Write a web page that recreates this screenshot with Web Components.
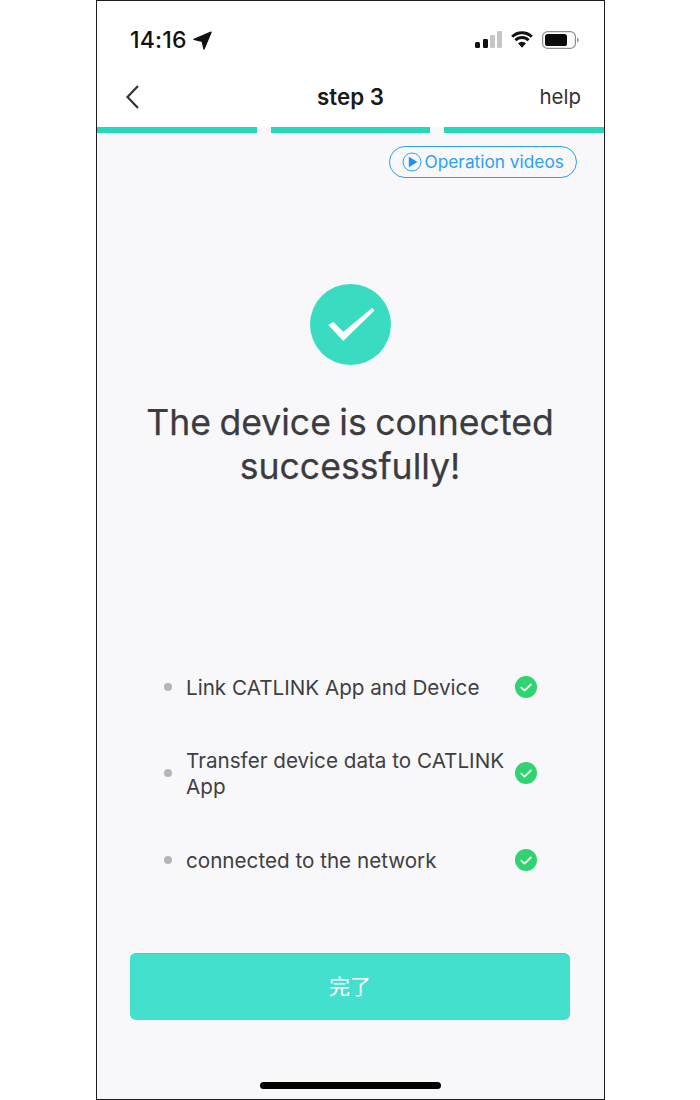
<!DOCTYPE html>
<html lang="en"><head><meta charset="utf-8">
<style>
html,body{margin:0;padding:0;background:#fff}
body{font-family:Inter,"Noto Sans CJK SC",sans-serif}
</style></head><body>
<phone-frame>
  <status-bar></status-bar>
  <nav-bar title="step 3" action="help"></nav-bar>
  <step-progress></step-progress>
  <video-link>Operation videos</video-link>
  <success-hero>The device is connected<br>successfully!</success-hero>
  <check-list>
    <check-item>Link CATLINK App and Device</check-item>
    <check-item>Transfer device data to CATLINK App</check-item>
    <check-item>connected to the network</check-item>
  </check-list>
  <primary-button>完了</primary-button>
  <home-indicator></home-indicator>
</phone-frame>
<script>
function def(name, html, setup){
  customElements.define(name, class extends HTMLElement{
    constructor(){super();this.attachShadow({mode:'open'}).innerHTML=html;}
    connectedCallback(){ if(setup) setup(this); }
  });
}
def('phone-frame',`<style>:host{display:block;box-sizing:border-box;width:509px;height:1100px;margin-left:96px;border:1px solid #1c1c1e;background:#f8f8fb;overflow:hidden}
.c{display:flex;flex-direction:column;height:100%}</style><div class="c"><slot></slot></div>`);
def('status-bar',`<style>:host{display:flex;align-items:center;height:78px;padding:0 25px 0 33px;background:#fff;box-sizing:border-box;color:#111}
.t{font:500 23px/1 Inter,sans-serif;letter-spacing:.2px}
.s{flex:1}
svg{display:block}</style>
<span class="t">14:16</span>
<svg style="margin-left:6px" width="19" height="19" viewBox="0 0 19 19"><path d="M1 8.4 18 1.2 11 18 9.2 10.2Z" fill="#111" stroke="#111" stroke-width="1.4" stroke-linejoin="round"/></svg>
<span class="s"></span>
<svg width="27" height="17" viewBox="0 0 27 17" style="margin-top:-2px"><rect x="0" y="11" width="5" height="6" rx="1.5" fill="#111"/><rect x="8" y="8" width="5" height="9" rx="1.2" fill="#111"/><rect x="15" y="4" width="5" height="13" rx="1.2" fill="#c6c6c6"/><rect x="22" y="0" width="5" height="17" rx="1.2" fill="#c6c6c6"/></svg>
<svg style="margin-left:9px;margin-top:-2px" width="22" height="17" viewBox="0 0 22 17"><path d="M1.2 5.7a14 14 0 0 1 19.6 0M4.4 9.2a9.4 9.4 0 0 1 13.2 0" fill="none" stroke="#111" stroke-width="3"/><path d="M7 12.2a6 6 0 0 1 8 0L11 16.8Z" fill="#111"/></svg>
<svg style="margin-left:9px" width="37" height="18" viewBox="0 0 37 18"><rect x=".6" y=".6" width="32.8" height="16.8" rx="5" fill="#fff" stroke="#8e8e8e" stroke-width="1.2"/><rect x="3" y="3" width="22" height="12" rx="2.6" fill="#0a0a0a"/><path d="M35 6.4c1.2.4 1.8 1.4 1.8 2.6s-.6 2.2-1.8 2.6Z" fill="#9a9a9a"/></svg>`);
def('nav-bar',`<style>:host{display:grid;grid-template-columns:1fr auto 1fr;align-items:center;height:48px;padding:0 28px 12px 28px;background:#fff;box-sizing:border-box}
svg{display:block}
.t{font:600 22.3px/1 Inter,sans-serif;color:#1a1a1a}
.a{justify-self:end;margin-right:-5px;font:400 20.5px/1 Inter,sans-serif;color:#333}</style>
<svg width="16" height="26" viewBox="0 0 16 26"><path d="M13 2 2.5 13 13 24" fill="none" stroke="#333" stroke-width="2.2"/></svg>
<span class="t"></span><span class="a"></span>`,el=>{
  el.shadowRoot.querySelector('.t').textContent=el.getAttribute('title');
  el.shadowRoot.querySelector('.a').textContent=el.getAttribute('action');
});
def('step-progress',`<style>:host{display:flex;gap:14px;height:6px}
i{flex:1;background:#22d9bb}</style><i></i><i></i><i></i>`);
def('video-link',`<style>:host{display:flex;justify-content:flex-end;padding:13px 27px 0 0}
.p{display:flex;align-items:center;gap:3px;box-sizing:border-box;height:32px;width:188px;padding-left:11.5px;border:1.5px solid #2ba0f5;border-radius:16px;color:#2ba0f5;font:400 17.3px/1 Inter,sans-serif}
svg{display:block;flex:none}</style>
<div class="p"><svg width="20" height="20" viewBox="0 0 20 20"><circle cx="10" cy="10" r="9" fill="none" stroke="#2ba0f5" stroke-width="1"/><path d="M6.8 4.8 15.5 10 6.8 15.2Z" fill="#2093f2"/></svg><span><slot></slot></span></div>`);
def('success-hero',`<style>:host{display:flex;flex-direction:column;align-items:center;padding-top:106px}
svg{display:block}
h1{margin:36px 1px 0 0;font:400 35.6px/44px Inter,sans-serif;word-spacing:-1.6px;color:#3c3c3f;text-align:center;-webkit-text-stroke:.25px #3c3c3f}</style>
<svg width="81" height="81" viewBox="0 0 81 81"><circle cx="40.5" cy="40.5" r="40.5" fill="#39dcc0"/><path d="M18.3 41 23.3 37.7 33.3 47.7 62.3 23.7 64.3 26.7 33.3 57Z" fill="#fff"/></svg>
<h1><slot></slot></h1>`);
def('check-list',`<style>:host{display:flex;flex-direction:column;gap:47px;padding:0 67px 0 67px;margin-top:184px}</style><slot></slot>`);
def('check-item',`<style>:host{display:flex;align-items:center;min-height:27px;color:#3f3f42;font:400 20.65px/26px Inter,sans-serif}
.d{flex:none;width:8px;height:8px;border-radius:50%;background:#b5b5b8;margin-right:14px}
.t{flex:1;min-width:0;margin:1px 0 -1px}
svg{display:block;flex:none;margin-left:6px}</style>
<span class="d"></span><span class="t"><slot></slot></span>
<svg width="22" height="22" viewBox="0 0 22 22"><circle cx="11" cy="11" r="11" fill="#2fd36f"/><path d="M5.8 11.2 9.5 14.6 16.4 8" fill="none" stroke="#fff" stroke-width="1.8"/></svg>`);
def('primary-button',`<style>:host{display:flex;align-items:center;justify-content:center;box-sizing:border-box;height:67px;margin:80px 34px 0 33px;padding-bottom:4px;border-radius:6px;background:#43e0cd;border-top:1px solid #1fdcc4;color:#fff;font:400 21px/1 "Noto Sans CJK JP","Noto Sans CJK SC",sans-serif}</style><slot></slot>`);
def('home-indicator',`<style>:host{display:flex;justify-content:center;margin-top:62px}
i{display:block;width:181px;height:7px;border-radius:4px;background:#000}</style><i></i>`);
</script>
</body></html>
